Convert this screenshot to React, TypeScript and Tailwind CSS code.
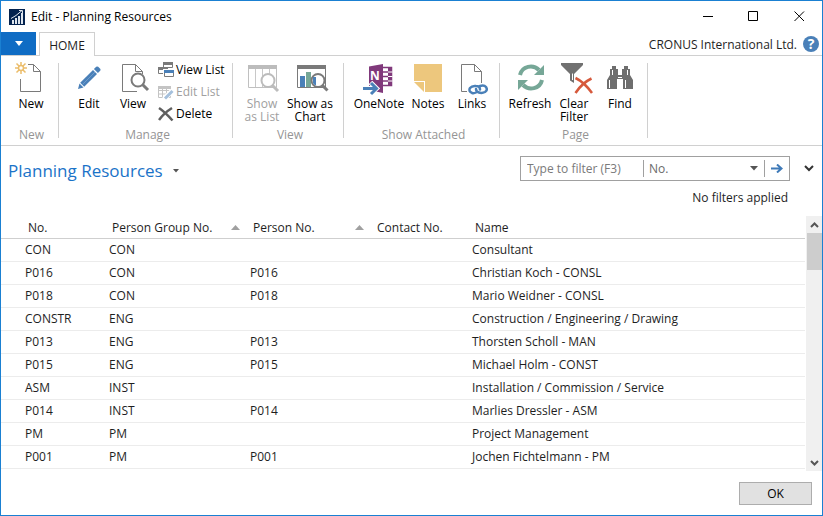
import type { ReactNode } from "react";

const GRAY = "#7a7a7a";
const BLUE = "#4a80b8";

function Icon({ children }: { children: ReactNode }) {
  return (
    <svg width="36" height="32" viewBox="0 0 36 32" className="shrink-0 overflow-visible" aria-hidden="true">
      {children}
    </svg>
  );
}

function NewIcon() {
  return (
    <Icon>
      <g stroke="#ebbd6b" strokeWidth="2" fill="none">
        <circle cx="8" cy="6" r="2.5" strokeWidth="1.5" />
        <path d="M8 0V3.500M8 8.500V12M2 6H5.500M10.500 6H14M3.500 1.500L6 4M10 8L12.500 10.500M12.500 1.500L10 4M6 8L3.500 10.500" strokeWidth="1.5" />
      </g>
      <path d="M15 2.500H20.500L27.500 9.500V29.500H7.500V17M20.500 2.500V9.500H27.500" fill="none" stroke={GRAY} />
    </Icon>
  );
}

function EditIcon() {
  return (
    <Icon>
      <g fill={BLUE}>
        <path d="M7 27L8.500 21.500L12.500 25.500Z" />
        <path d="M9.200 20.800L22 8L26 12L13.200 24.800Z" />
        <path d="M22.900 7.100L25.200 4.800Q26.200 4 27.200 4.800L29.200 6.800Q30 7.800 29.200 8.800L26.900 11.100Z" />
      </g>
      <path d="M11.500 22.500L24 10" stroke="#6f9ccb" />
    </Icon>
  );
}

function ViewIcon() {
  return (
    <Icon>
      <path d="M22 29.500H7.500V2.500H20.500L27.500 9.500V12M20.500 2.500V9.500H27.500" fill="none" stroke={GRAY} />
      <circle cx="23" cy="18" r="6.500" fill="#fff" stroke={GRAY} strokeWidth="2" />
      <path d="M27.500 22.500L33 28" stroke={GRAY} strokeWidth="3" />
    </Icon>
  );
}

function ListGlassIcon() {
  return (
    <Icon>
      <path d="M4.500 3.500H32.500V25.500H4.500Z" fill="#fff" stroke="#c0c0c0" />
      <path d="M4 3H33V7H4Z" fill="#bcbcbc" />
      <path d="M11.500 7V25M18.500 7V25M25.500 7V25" stroke="#c8c8c8" />
      <circle cx="24" cy="18.500" r="6.500" fill="#fff" stroke="#bcbcbc" strokeWidth="2" />
      <path d="M28.500 23.500L34 29" stroke="#bcbcbc" strokeWidth="3" />
    </Icon>
  );
}

function ChartGlassIcon() {
  return (
    <Icon>
      <path d="M5.500 3.500H33.500V25.500H5.500Z" fill="#fff" stroke={GRAY} />
      <path d="M5 3H34V7H5Z" fill={GRAY} />
      <path d="M8 14H13V25H8Z" fill={BLUE} />
      <path d="M14 10H19V25H14Z" fill="#76a797" />
      <circle cx="26" cy="18.500" r="6.500" fill="#fff" stroke={GRAY} strokeWidth="2" />
      <path d="M21 15H24V23.500Q21.500 22.500 21 21Z" fill={BLUE} />
      <path d="M30.500 23.500L35.500 28.500" stroke={GRAY} strokeWidth="3" />
    </Icon>
  );
}

function OneNoteIcon() {
  return (
    <Icon>
      <path d="M22 5.500H30.500V23.500H22M22 10H28M22 14.500H28M22 19H28" fill="none" stroke="#80397b" strokeWidth="1.5" />
      <path d="M29 5V24" stroke="#80397b" strokeWidth="4" />
      <path d="M27 10H31.500M27 14.500H31.500M27 19H31.500" stroke="#fff" />
      <path d="M8 4.500L22 2V31L8 28Z" fill="#80397b" />
      <text x="9" y="18" fill="#fff" fontSize="12" fontWeight="700" fontFamily="Open Sans, sans-serif">N</text>
      <path d="M2 26.500H14M9.500 20.500L15.500 26.500L9.500 32" fill="none" stroke="#fff" strokeWidth="5" />
      <path d="M2 26.500H15M10 21L15.500 26.500L10 32" fill="none" stroke={BLUE} strokeWidth="3" />
    </Icon>
  );
}

function NotesIcon() {
  return (
    <Icon>
      <path d="M4 2H32V30H15V19H4Z" fill="#edc77d" />
      <path d="M4 20H14V30Z" fill="#edc77d" />
    </Icon>
  );
}

function LinksIcon() {
  return (
    <Icon>
      <path d="M13 29.500H7.500V2.500H20.500L27.500 9.500V21M20.500 2.500V9.500H27.500" fill="none" stroke={GRAY} />
      <g fill="none" stroke={BLUE} strokeWidth="2.500" strokeLinecap="round">
        <path d="M22 30.500Q20 31.500 18 31Q14 29 16 26Q18 23.500 22 24Q26 24 26 27.500" />
        <path d="M26 24Q30 22.500 32 25Q34 28 31 30Q28 31.500 25 30.500Q22 29.500 22 27" />
      </g>
    </Icon>
  );
}

function RefreshIcon() {
  return (
    <Icon>
      <g fill="none" stroke="#76a797" strokeWidth="4">
        <path d="M8 13C10 4 21 2 27 8" />
        <path d="M30 18C28 27 17 29 11 23" />
      </g>
      <path d="M32 3V13H22Z" fill="#76a797" />
      <path d="M6 28V18H16Z" fill="#76a797" />
    </Icon>
  );
}

function ClearFilterIcon() {
  return (
    <Icon>
      <path d="M5 1H27V3L18 12V21L14 18.500V12L5 3Z" fill="#717171" />
      <path d="M16.500 11.500V18" stroke="#fff" />
      <path d="M19.500 16Q28 20 36 31M35.500 16.500Q26 21 19.500 31" fill="none" stroke="#d6593c" strokeWidth="2.500" />
    </Icon>
  );
}

function FindIcon() {
  return (
    <Icon>
      <path d="M10 4H14V7H16V13H20V7H22V4H26V7H28V13L31 18V27H21V17H15V27H5V18L8 13V7H10Z" fill="#6e6e6e" />
      <path d="M7.500 18V26M10.500 8V13M23.500 18V26M25.500 8V13M16 15.500H20" stroke="#fff" />
    </Icon>
  );
}

function RibbonButton({ icon, label, width, disabled }: { icon: ReactNode; label: string; width: string; disabled?: boolean }) {
  return (
    <button type="button" disabled={disabled} className={`${width} flex flex-col items-center disabled:text-[#a0a0a0]`}>
      {icon}
      <span className="mt-[3px] leading-[13px] whitespace-pre">{label}</span>
    </button>
  );
}

function SmallButton({ icon, label, disabled }: { icon: ReactNode; label: string; disabled?: boolean }) {
  return (
    <button type="button" disabled={disabled} className="flex h-[22px] items-center gap-0.5 whitespace-nowrap disabled:text-[#a0a0a0]">
      <svg width="16" height="16" viewBox="0 0 16 16" className="shrink-0" aria-hidden="true">{icon}</svg>
      {label}
    </button>
  );
}

function Group({ label, width, children }: { label: string; width: string; children: ReactNode }) {
  return (
    <section aria-label={label} className={`${width} border-r border-[#d0d0d0]`}>
      <div className="flex h-[65px] items-start">{children}</div>
      <div className="pl-1 text-center leading-[14px] text-[#959595]">{label}</div>
    </section>
  );
}

const rows = [
  ["CON", "CON", "", "", "Consultant"],
  ["P016", "CON", "P016", "", "Christian Koch - CONSL"],
  ["P018", "CON", "P018", "", "Mario Weidner - CONSL"],
  ["CONSTR", "ENG", "", "", "Construction / Engineering / Drawing"],
  ["P013", "ENG", "P013", "", "Thorsten Scholl - MAN"],
  ["P015", "ENG", "P015", "", "Michael Holm - CONST"],
  ["ASM", "INST", "", "", "Installation / Commission / Service"],
  ["P014", "INST", "P014", "", "Marlies Dressler - ASM"],
  ["PM", "PM", "", "", "Project Management"],
  ["P001", "PM", "P001", "", "Jochen Fichtelmann - PM"],
];

const columns = [
  { name: "No.", width: "w-[105px]", pad: "pl-[27px]", sorted: false },
  { name: "Person Group No.", width: "w-[141px]", pad: "pl-1.5", sorted: true },
  { name: "Person No.", width: "w-[124px]", pad: "pl-1.5", sorted: true },
  { name: "Contact No.", width: "w-[98px]", pad: "pl-1.5", sorted: false },
  { name: "Name", width: "", pad: "pl-1.5", sorted: false },
];

export default function App() {
  return (
    <div className="flex min-h-screen flex-col border border-[#1a80d2] bg-white font-['Open_Sans',sans-serif] text-xs text-[#1e1e1e]">
      <header className="flex h-[31px] items-center pl-2">
        <svg width="16" height="16" viewBox="0 0 16 16" aria-hidden="true">
          <path d="M0 0H16V16H0Z" fill="#04234f" />
          <path d="M3 11H5V15H3ZM6 9H8V15H6ZM9 7H11V15H9ZM12 4H14V15H12Z" fill="#dfe6ee" />
          <path d="M2 9.500L7 6.500L13 1.500M10 1.500H13.500V4" fill="none" stroke="#dfe6ee" />
        </svg>
        <h1 className="ml-1.5 grow text-black">Edit - Planning Resources</h1>
        <button type="button" aria-label="Minimize" className="flex w-[46px] justify-center">
          <svg width="11" height="11"><path d="M1 5.500H11" stroke="#000" /></svg>
        </button>
        <button type="button" aria-label="Maximize" className="flex w-[46px] justify-center">
          <svg width="11" height="11"><path d="M.5 .5H9.500V9.500H.5Z" fill="none" stroke="#000" /></svg>
        </button>
        <button type="button" aria-label="Close" className="flex w-[46px] justify-center">
          <svg width="11" height="11"><path d="M.5 .5L10 10M10 .5L.5 10" stroke="#000" /></svg>
        </button>
      </header>

      <div className="flex h-6 border-b border-[#d0d0d0]">
        <button type="button" aria-label="Application menu" className="flex h-[23px] w-[35px] items-center justify-center bg-[#0f6cc4]">
          <svg width="8" height="5"><path d="M0 0H8L4 5Z" fill="#fff" /></svg>
        </button>
        <button type="button" className="-mb-px ml-[3px] h-6 w-14 border border-b-0 border-[#d0d0d0] bg-white pt-0.5">HOME</button>
        <div className="ml-auto flex items-center gap-1.5 pr-[3px]">
          <span className="pt-0.5">CRONUS International Ltd.</span>
          <button type="button" aria-label="Help" className="size-4 rounded-full bg-[#4a80b8] text-sm leading-4 font-bold text-white">?</button>
        </div>
      </div>

      <div className="flex h-[90px] border-b border-[#d0d0d0] pt-[7px] pb-[7px] text-black">
        <Group label="New" width="w-[58px]">
          <div className="-mt-px pl-2">
            <RibbonButton icon={<NewIcon />} label="New" width="w-11" />
          </div>
        </Group>
        <Group label="Manage" width="w-[174px]">
          <div className="-mt-px flex items-start pl-2">
            <RibbonButton icon={<EditIcon />} label="Edit" width="w-11" />
            <RibbonButton icon={<ViewIcon />} label="View" width="w-11" />
          </div>
          <div className="-mt-1 ml-[3px]">
            <SmallButton
              label="View List"
              icon={
                <>
                  <path d="M5.500 .5H14.500V5.500H5.500Z" fill="#fff" stroke={GRAY} /><path d="M5 0H15V3H5Z" fill={GRAY} />
                  <path d="M.5 5.500H9.500V11.500H.5Z" fill="#fff" stroke={GRAY} /><path d="M0 5H10V8H0Z" fill={GRAY} />
                  <path d="M5 7H16V15H5Z" fill="#fff" />
                  <path d="M6.500 8.500H15.500V14.500H6.500Z" fill="#fff" stroke={GRAY} /><path d="M6 8H16V11H6Z" fill={BLUE} />
                </>
              }
            />
            <SmallButton
              disabled
              label="Edit List"
              icon={
                <>
                  <path d="M.5 2.500H12.500V13.500H.5ZM.5 6.500H12.500M.5 10H12.500M4.500 3V13M8.500 3V13" fill="#fff" stroke="#c4c4c4" />
                  <path d="M0 2H13V5H0Z" fill="#c4c4c4" />
                  <path d="M6 15L14.500 6.500" stroke="#fff" strokeWidth="5" /><path d="M7 14.500L14.500 7" stroke="#a5c0dc" strokeWidth="3" />
                </>
              }
            />
            <SmallButton label="Delete" icon={<path d="M1 2Q7 6 14.500 14.500M14 2Q6 7 1 14" fill="none" stroke="#606060" strokeWidth="2.500" />} />
          </div>
        </Group>
        <Group label="View" width="w-[111px]">
          <div className="-mt-px flex items-start pl-[5px]">
            <RibbonButton icon={<ListGlassIcon />} label={"Show\nas List"} width="w-12" disabled />
            <RibbonButton icon={<ChartGlassIcon />} label={"Show as\nChart"} width="w-12" />
          </div>
        </Group>
        <Group label="Show Attached" width="w-[156px]">
          <div className="-mt-px flex items-start pl-2">
            <RibbonButton icon={<OneNoteIcon />} label="OneNote" width="w-[54px]" />
            <RibbonButton icon={<NotesIcon />} label="Notes" width="w-11" />
            <RibbonButton icon={<LinksIcon />} label="Links" width="w-11" />
          </div>
        </Group>
        <Group label="Page" width="w-[148px]">
          <div className="-mt-px flex items-start pl-2">
            <RibbonButton icon={<RefreshIcon />} label="Refresh" width="w-11" />
            <RibbonButton icon={<ClearFilterIcon />} label={"Clear\nFilter"} width="w-11" />
            <RibbonButton icon={<FindIcon />} label="Find" width="w-12" />
          </div>
        </Group>
      </div>

      <div className="flex items-start justify-between pt-[10px] pl-[7px]">
        <button type="button" className="mt-[3px] flex items-center gap-2.5 text-[17px] leading-6 text-[#1a73c8]">
          Planning Resources
          <svg width="6" height="4"><path d="M0 0H6L3 3.500Z" fill="#555" /></svg>
        </button>
        <div className="flex items-center pr-2">
          <div className="flex h-[25px] w-[270px] items-center border border-[#a0a0a0] text-[#6a6a6a]">
            <input aria-label="Filter" placeholder="Type to filter (F3)" className="h-full min-w-0 grow pl-1.5 outline-none placeholder:text-[#7a7a7a]" />
            <div className="flex h-[17px] w-[122px] shrink-0 items-center border-x border-[#a0a0a0]">
              <select aria-label="Filter field" className="grow appearance-none pl-[5px]">
                <option>No.</option>
              </select>
              <svg width="8" height="5" className="mr-1.5"><path d="M0 0H8L4 4.500Z" fill="#555" /></svg>
            </div>
            <button type="button" aria-label="Apply filter" className="flex w-6 shrink-0 justify-center">
              <svg width="12" height="9"><path d="M0 4.500H10M6 .5L10.500 4.500L6 8.500" fill="none" stroke="#3f7ab8" strokeWidth="2" /></svg>
            </button>
          </div>
          <button type="button" aria-label="Expand filter pane" className="ml-[14px]">
            <svg width="10" height="7"><path d="M1 1L5 5L9 1" fill="none" stroke="#333" strokeWidth="2" /></svg>
          </button>
        </div>
      </div>
      <p className="mt-[7px] mb-[10px] pr-[34px] text-right leading-4">No filters applied</p>

      <div className="flex">
        <table className="mb-0.5 grow table-fixed border-collapse text-left">
          <thead>
            <tr className="h-[22px] border-b border-[#cfcfcf]">
              {columns.map((c) => (
                <th key={c.name} scope="col" className={`${c.width} ${c.pad} pt-0.5 pr-[7px] pb-0 font-normal`}>
                  <span className="flex items-center justify-between">
                    {c.name}
                    {c.sorted && <svg width="9" height="5"><path d="M0 5L4.500 0L9 5Z" fill="#a0a0a0" /></svg>}
                  </span>
                </th>
              ))}
            </tr>
          </thead>
          <tbody>
            {rows.map((r) => (
              <tr key={r[0]} className="h-[23px] border-b border-[#ececec]">
                {r.map((v, i) => (
                  <td key={i} className={`py-0 pr-0 ${i === 0 ? "pl-6" : "pl-[3px]"}`}>{v}</td>
                ))}
              </tr>
            ))}
          </tbody>
        </table>
        <div className="ml-px flex w-4 flex-col items-center bg-[#f0f0f0]">
          <svg width="9" height="17"><path d="M1 11L4.500 7.500L8 11" fill="none" stroke="#555" strokeWidth="2" /></svg>
          <div className="h-[37px] w-[15px] bg-[#cdcdcd]" />
          <svg width="9" height="17" className="mt-auto"><path d="M1 7L4.500 10.500L8 7" fill="none" stroke="#555" strokeWidth="2" /></svg>
        </div>
      </div>

      <footer className="mt-auto flex justify-end pt-[10px] pr-[10px] pb-[10px]">
        <button type="button" className="h-[23px] w-[73px] border border-[#adadad] bg-[#e1e1e1] text-black">OK</button>
      </footer>
    </div>
  );
}
